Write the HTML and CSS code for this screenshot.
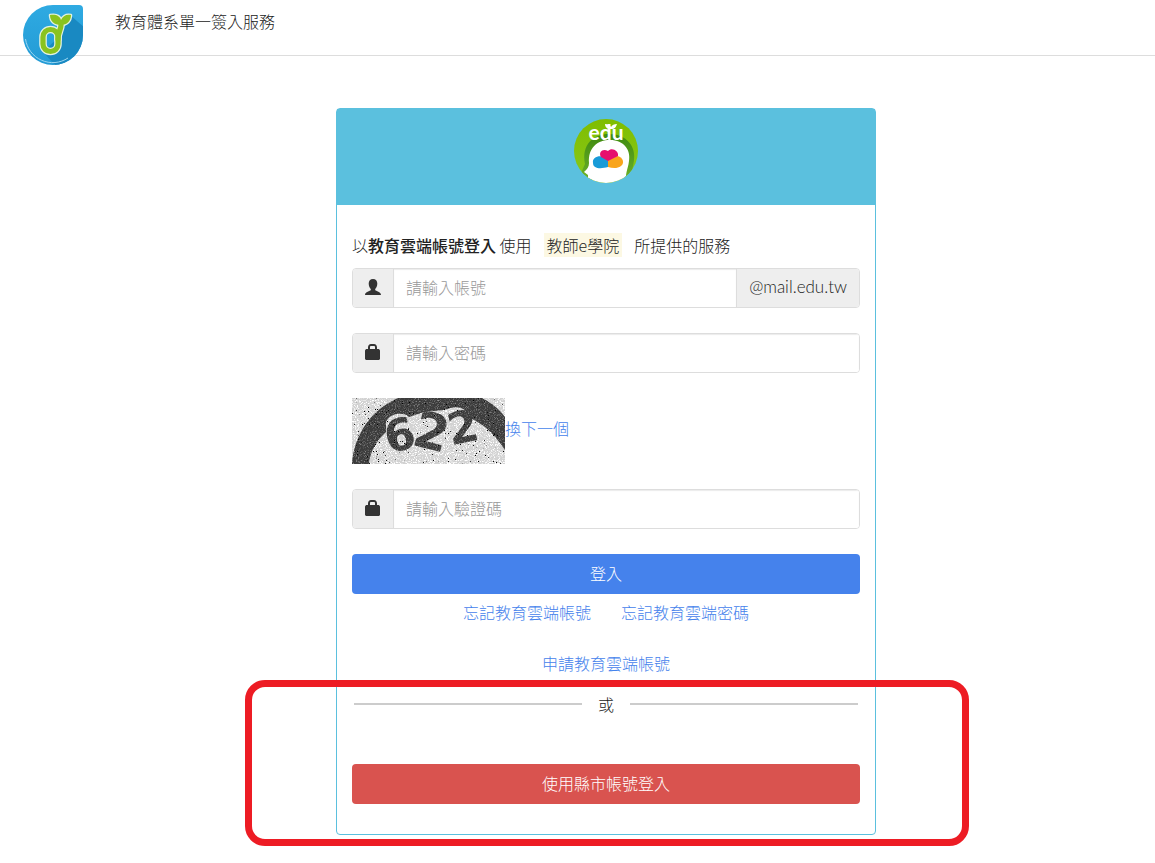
FILE: index.html
```html
<!DOCTYPE html>
<html lang="zh-Hant">
<head>
<meta charset="utf-8">
<meta name="viewport" content="width=device-width, initial-scale=1">
<title>教育體系單一簽入服務</title>
<link rel="stylesheet" href="styles.css">
</head>
<body>
<header class="topbar">
  <svg class="brand-logo" viewBox="0 0 60 60" aria-hidden="true">
    <defs>
      <linearGradient id="drop" x1="0" y1="0" x2="0" y2="1"><stop offset="0" stop-color="#2faae2"/><stop offset="1" stop-color="#239bd5"/></linearGradient>
      <clipPath id="dropclip"><path d="M30 0H56Q60 0 60 4V30A30 30 0 1 1 30 0Z"/></clipPath>
    </defs>
    <path d="M30 0H56Q60 0 60 4V30A30 30 0 1 1 30 0Z" fill="url(#drop)"/>
    <g clip-path="url(#dropclip)"><path d="M47 10L62 23V62H34L20 47L38 30Z" fill="#1989c2"/></g>
    <path d="M2.500 34A27.500 27.500 0 0 0 45 53" fill="none" stroke="#9bd6f1" stroke-width="1"/>
    <g fill="none" stroke-linecap="round" stroke-linejoin="round">
      <g stroke="#e3f2e1" stroke-width="7.600">
        <rect x="20" y="24.500" width="15" height="22" rx="7.500"/>
        <path d="M38 20C38 25 35 27 35 34"/>
      </g>
      <path d="M38 20C31 20 27 16 27 10C33 9 37 11 38 15C40 11 43 9 48 10C48 16 44 20 38 20Z" fill="#8ac31f" stroke="#e3f2e1" stroke-width="2.500"/>
      <g stroke="#8ac31f" stroke-width="5.200">
        <rect x="20" y="24.500" width="15" height="22" rx="7.500"/>
        <path d="M38 20C38 25 35 27 35 34"/>
      </g>
      <path d="M38 20C31 20 27 16 27 10C33 9 37 11 38 15C40 11 43 9 48 10C48 16 44 20 38 20Z" fill="#8ac31f"/>
    </g>
  </svg>
  <span class="brand-name">教育體系單一簽入服務</span>
</header>

<main class="page">
  <section class="card">
    <div class="card-head">
      <svg class="edu-logo" viewBox="0 0 64 64" role="img" aria-label="edu">
        <defs>
          <linearGradient id="leaf" x1="0" y1="0" x2="0" y2="1"><stop offset="0" stop-color="#7fbd00"/><stop offset="1" stop-color="#88c91c"/></linearGradient>
          <linearGradient id="ring" x1="0" y1="0" x2="0" y2="1"><stop offset="0" stop-color="#3f8a10"/><stop offset="1" stop-color="#6fb42a"/></linearGradient>
          <clipPath id="disc"><circle cx="32" cy="32" r="32"/></clipPath>
        </defs>
        <g clip-path="url(#disc)">
          <rect width="64" height="64" fill="url(#leaf)"/>
          <path d="M12 64C11 58 9 58 7 54L11 45C7 25 20 15 35 15C53 15 62 28 60 41C59 50 56 56 57 64Z" fill="url(#ring)"/>
          <path d="M19 64C19 60 16 60 14 59L14 56L10 53C13 50 15 48 15 44C14 29 23 21 36 21C50 21 57 31 55 42C54 51 50 56 53 64Z" fill="#fff"/>
          <path d="M19 44C18 38 25 36 30 38L34 41L34 48C27 50 19 50 19 44Z" fill="#189bd8"/>
          <path d="M34 41L43 37C49 38 51 44 47 47C43 50 38 49 34 48Z" fill="#f9a51c"/>
          <path d="M27 38C24 33 29 29 34 32C38 28 45 32 44 37L34 42Z" fill="#e6106e"/>
        </g>
        <text x="32" y="21" text-anchor="middle" class="edu-word">edu</text>
        <path d="M37 10C33 10 31 8 31 5C34 5 36 6 37 8C38 6 40 5 43 5C42 8 41 10 37 10Z" fill="#fff"/>
      </svg>
    </div>

    <form class="card-body">
      <p class="intro">以<strong>教育雲端帳號登入</strong> 使用<mark>教師e學院</mark>所提供的服務</p>

      <div class="group">
        <label class="addon" for="account" aria-label="帳號">
          <svg class="icon" viewBox="0 0 16 16"><path d="M8 0C10.800 0 12.300 1.800 12.300 4.600C12.300 7 11.400 8.800 10.200 10V11C10.800 12.200 16 12.600 16 16H0C0 12.600 5.200 12.200 5.800 11V10C4.600 8.800 3.700 7 3.700 4.600C3.700 1.800 5.200 0 8 0Z"/></svg>
        </label>
        <input class="field" id="account" type="text" placeholder="請輸入帳號">
        <span class="addon domain">@mail.edu.tw</span>
      </div>

      <div class="group">
        <label class="addon" for="password" aria-label="密碼">
          <svg class="icon" viewBox="0 0 16 16"><path fill-rule="evenodd" d="M3 5V3.500C3 1.200 4.200 0 6 0H9C10.800 0 12 1.200 12 3.500V5H14L15 6.500V15L14 16H1L0 15V6.500L1 5ZM5 5H10V3.500C10 2.400 9.600 2 9 2H6C5.400 2 5 2.400 5 3.500Z"/></svg>
        </label>
        <input class="field" id="password" type="password" placeholder="請輸入密碼">
      </div>

      <div class="captcha">
        <svg class="captcha-image" viewBox="0 0 153 66" role="img" aria-label="驗證碼">
          <defs>
            <filter id="grain" x="0" y="0" width="100%" height="100%" color-interpolation-filters="sRGB">
              <feTurbulence type="fractalNoise" baseFrequency="0.9" numOctaves="2" seed="7" result="n"/>
              <feColorMatrix in="n" type="matrix" values="1 0 0 0 -0.500  1 0 0 0 -0.500  1 0 0 0 -0.500  0 0 0 0 1" result="g"/>
              <feComposite in="SourceGraphic" in2="g" operator="arithmetic" k1="0" k2="1" k3="1" k4="0" result="light"/>
              <feColorMatrix in="n" type="matrix" values="0 0 0 0 0  0 0 0 0 0  0 0 0 0 0  0 -22 0 0 6" result="specks"/>
              <feMerge><feMergeNode in="light"/><feMergeNode in="specks"/></feMerge>
            </filter>
          </defs>
          <g filter="url(#grain)">
            <rect width="153" height="66" fill="#d2d2d2"/>
            <path d="M0 66C2 38 18 12 46 0H130C140 5 148 12 153 19V52C143 37 132 26 118 20C114 8 104 7 92 12L72 14L57 19C53 14 38 14 34 24V34C25 42 18 53 17 66Z" fill="#3c3c3c"/>
            <g class="captcha-code">
              <text x="33" y="53" transform="rotate(-14 46 40)">6</text>
              <text x="62" y="51" class="tall" transform="rotate(14 79 34)">2</text>
              <text x="96" y="45" transform="rotate(-12 109 32)">2</text>
            </g>
          </g>
        </svg>
        <a href="#">換下一個</a>
      </div>

      <div class="group">
        <label class="addon" for="code" aria-label="驗證碼">
          <svg class="icon" viewBox="0 0 16 16"><path fill-rule="evenodd" d="M3 5V3.500C3 1.200 4.200 0 6 0H9C10.800 0 12 1.200 12 3.500V5H14L15 6.500V15L14 16H1L0 15V6.500L1 5ZM5 5H10V3.500C10 2.400 9.600 2 9 2H6C5.400 2 5 2.400 5 3.500Z"/></svg>
        </label>
        <input class="field" id="code" type="text" placeholder="請輸入驗證碼">
      </div>

      <button class="btn btn-primary" type="submit">登入</button>
      <nav class="help">
        <a href="#">忘記教育雲端帳號</a>
        <a href="#">忘記教育雲端密碼</a>
      </nav>
      <nav class="apply"><a href="#">申請教育雲端帳號</a></nav>

      <div class="alternative">
        <div class="divider">或</div>
        <button class="btn btn-danger" type="button">使用縣市帳號登入</button>
        <div class="highlight"></div>
      </div>
    </form>
  </section>
</main>
</body>
</html>
```
FILE: styles.css
```css
* { box-sizing: border-box; }

body {
  margin: 0;
  background: #fff;
  color: #222;
  font: 300 16px/24px "Noto Sans CJK TC", sans-serif;
}

a { color: #4582ec; text-decoration: none; }

.topbar {
  display: flex;
  align-items: flex-start;
  gap: 32px;
  height: 56px;
  padding: 5px 23px;
  border-bottom: 1px solid #ddd;
}
.brand-logo { flex: none; width: 60px; height: 60px; }
.brand-name { padding-top: 4px; }

.page { padding: 52px 0 28px 57px; }

.card {
  max-width: 540px;
  margin: 0 auto;
  border: 1px solid #5bc0de;
  border-radius: 4px;
}
.card-head {
  display: flex;
  justify-content: center;
  padding: 10px 15px 22px;
  background: #5bc0de;
}
.edu-logo { width: 64px; height: 64px; }
.edu-word { font: 700 21px Lato, sans-serif; fill: #fff; }

.card-body { padding: 28px 15px 30px; }

.intro { margin: 0 0 11px; }
.intro strong { font-weight: 500; }
.intro mark {
  display: inline-block;
  margin: 0 12px;
  padding: 0 3px;
  background: #fcf8e3;
  color: #222;
  font-weight: 300;
}

.group {
  display: flex;
  height: 40px;
  margin-bottom: 25px;
  border: 1px solid #ddd;
  border-radius: 4px;
  overflow: hidden;
}
.addon {
  display: flex;
  align-items: center;
  justify-content: center;
  width: 41px;
  padding-bottom: 2px;
  border-right: 1px solid #ddd;
  background: #eee;
}
.icon { width: 16px; height: 16px; fill: #333; }
.domain {
  width: auto;
  padding: 0 12px 2px;
  border-right: 0;
  border-left: 1px solid #ddd;
  font-family: Lato, sans-serif;
  font-size: 17px;
}
.field {
  flex: 1;
  min-width: 0;
  padding: 0 12px 2px;
  border: 0;
  background: #fff;
  box-shadow: inset 0 1px 1px rgba(0, 0, 0, 0.08);
  font: inherit;
}
.field::placeholder { color: #999; opacity: 1; }

.captcha { display: flex; align-items: center; margin-bottom: 25px; }
.captcha a { padding-bottom: 6px; }
.captcha-image { width: 153px; height: 66px; }
.captcha-code text { font: 700 44px "DejaVu Sans", sans-serif; fill: #3c3c3c; }
.captcha-code .tall { font-size: 50px; }

.btn {
  display: block;
  width: 100%;
  height: 40px;
  padding: 0 12px 3px;
  border: 0;
  border-radius: 4px;
  color: #fff;
  font: inherit;
}
.btn-primary { background: #4582ec; }
.btn-danger { background: #d9534f; }

.help {
  display: flex;
  justify-content: center;
  gap: 30px;
  margin: 6px 0 27px;
}
.apply { margin-bottom: 17px; text-align: center; }

.alternative { position: relative; }
.divider {
  display: flex;
  align-items: center;
  gap: 16px;
  margin: 0 2px 48px;
}
.divider::before,
.divider::after { content: ""; flex: 1; height: 2px; background: #ccc; }
.highlight {
  position: absolute;
  inset: -12px -109px -42px -107px;
  border: 7px solid #ed1c24;
  border-radius: 20px;
  pointer-events: none;
}
```
